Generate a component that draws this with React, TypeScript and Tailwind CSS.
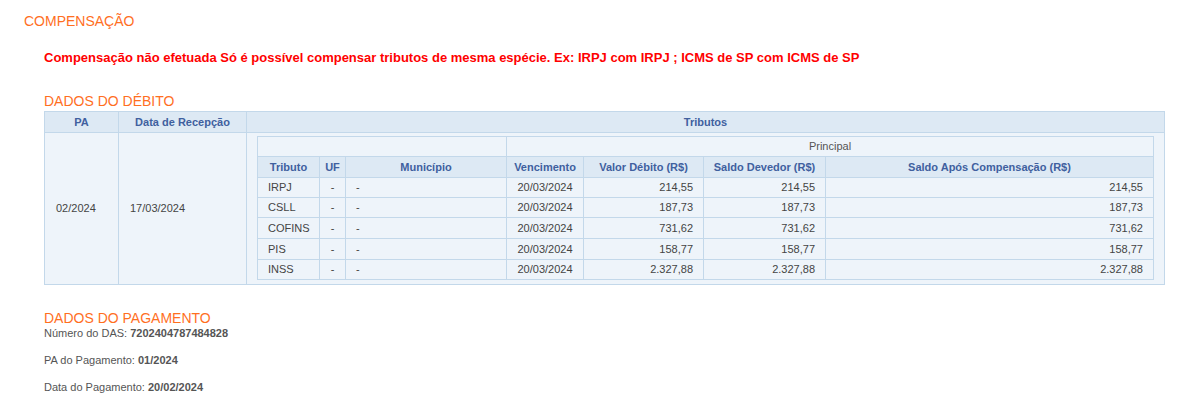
import React from "react";

type Row = {
  tributo: string;
  uf: string;
  municipio: string;
  vencimento: string;
  valorDebito: string;
  saldoDevedor: string;
  saldoApos: string;
};

const rows: Row[] = [
  { tributo: "IRPJ", uf: "-", municipio: "-", vencimento: "20/03/2024", valorDebito: "214,55", saldoDevedor: "214,55", saldoApos: "214,55" },
  { tributo: "CSLL", uf: "-", municipio: "-", vencimento: "20/03/2024", valorDebito: "187,73", saldoDevedor: "187,73", saldoApos: "187,73" },
  { tributo: "COFINS", uf: "-", municipio: "-", vencimento: "20/03/2024", valorDebito: "731,62", saldoDevedor: "731,62", saldoApos: "731,62" },
  { tributo: "PIS", uf: "-", municipio: "-", vencimento: "20/03/2024", valorDebito: "158,77", saldoDevedor: "158,77", saldoApos: "158,77" },
  { tributo: "INSS", uf: "-", municipio: "-", vencimento: "20/03/2024", valorDebito: "2.327,88", saldoDevedor: "2.327,88", saldoApos: "2.327,88" },
];

// row heights in the original aren't quite even
const rowHeights = ["h-[20px]", "h-[20px]", "h-[21px]", "h-[21px]", "h-[20px]"];

const th = "border border-[#c3d8ea] bg-[#dde9f4] font-bold text-[#40609f] text-center h-[21px] p-0";
const td = "border border-[#c3d8ea] py-0 px-[10px]";

function Heading({ children, className = "" }: { children: React.ReactNode; className?: string }) {
  return <h2 className={"text-[14px] leading-[16px] text-[#ff6f1f] font-normal " + className}>{children}</h2>;
}

function TributosTable() {
  return (
    <table className="w-full table-fixed border-collapse text-[11px] leading-[13px]">
      <colgroup>
        <col className="w-[62px]" />
        <col className="w-[26px]" />
        <col className="w-[161px]" />
        <col className="w-[77px]" />
        <col className="w-[120px]" />
        <col className="w-[122px]" />
        <col />
      </colgroup>
      <thead>
        <tr className="h-[20px]">
          <td colSpan={3} className="border border-[#c3d8ea] p-0" />
          <td colSpan={4} className="border border-[#c3d8ea] p-0 text-center text-[#555]">
            Principal
          </td>
        </tr>
        <tr>
          <th className={th}>Tributo</th>
          <th className={th}>UF</th>
          <th className={th}>Município</th>
          <th className={th}>Vencimento</th>
          <th className={th}>Valor Débito (R$)</th>
          <th className={th}>Saldo Devedor (R$)</th>
          <th className={th}>Saldo Após Compensação (R$)</th>
        </tr>
      </thead>
      <tbody>
        {rows.map((r, i) => (
          <tr key={r.tributo} className={rowHeights[i]}>
            <td className={td}>{r.tributo}</td>
            <td className={td + " text-center"}>{r.uf}</td>
            <td className={td}>{r.municipio}</td>
            <td className={td + " text-center"}>{r.vencimento}</td>
            <td className={td + " text-right"}>{r.valorDebito}</td>
            <td className={td + " text-right"}>{r.saldoDevedor}</td>
            <td className={td + " text-right"}>{r.saldoApos}</td>
          </tr>
        ))}
      </tbody>
    </table>
  );
}

export default function App() {
  return (
    <div className="bg-white min-h-[399px] pt-[13px] pl-[24px] pr-[29px] text-[#444] font-['Liberation_Sans',Arial,sans-serif]">
      <Heading>COMPENSAÇÃO</Heading>
      <div className="pl-[20px]">
        <p className="mt-[21px] text-[13px] leading-[15px] font-bold text-[#ff0000]">
          Compensação não efetuada Só é possível compensar tributos de mesma espécie. Ex: IRPJ com IRPJ ; ICMS de SP com ICMS de SP
        </p>

        <Heading className="mt-[28px] mb-[2px]">DADOS DO DÉBITO</Heading>
        <table className="w-full table-fixed border-collapse bg-[#eef4fa] text-[11px] leading-[13px]">
          <colgroup>
            <col className="w-[74px]" />
            <col className="w-[128px]" />
            <col />
          </colgroup>
          <thead>
            <tr>
              <th className={th}>PA</th>
              <th className={th}>Data de Recepção</th>
              <th className={th}>Tributos</th>
            </tr>
          </thead>
          <tbody>
            <tr>
              <td className="border border-[#c3d8ea] px-[11px]">02/2024</td>
              <td className="border border-[#c3d8ea] px-[11px]">17/03/2024</td>
              <td className="border border-[#c3d8ea] px-[10px] pt-[3px] pb-[4px]">
                <TributosTable />
              </td>
            </tr>
          </tbody>
        </table>

        <Heading className="mt-[25px]">DADOS DO PAGAMENTO</Heading>
        <div className="text-[11px] leading-[13px] text-[#555]">
          <p className="mt-[1px]">
            Número do DAS: <strong>7202404787484828</strong>
          </p>
          <p className="mt-[14px]">
            PA do Pagamento: <strong>01/2024</strong>
          </p>
          <p className="mt-[14px]">
            Data do Pagamento: <strong>20/02/2024</strong>
          </p>
        </div>
      </div>
    </div>
  );
}
